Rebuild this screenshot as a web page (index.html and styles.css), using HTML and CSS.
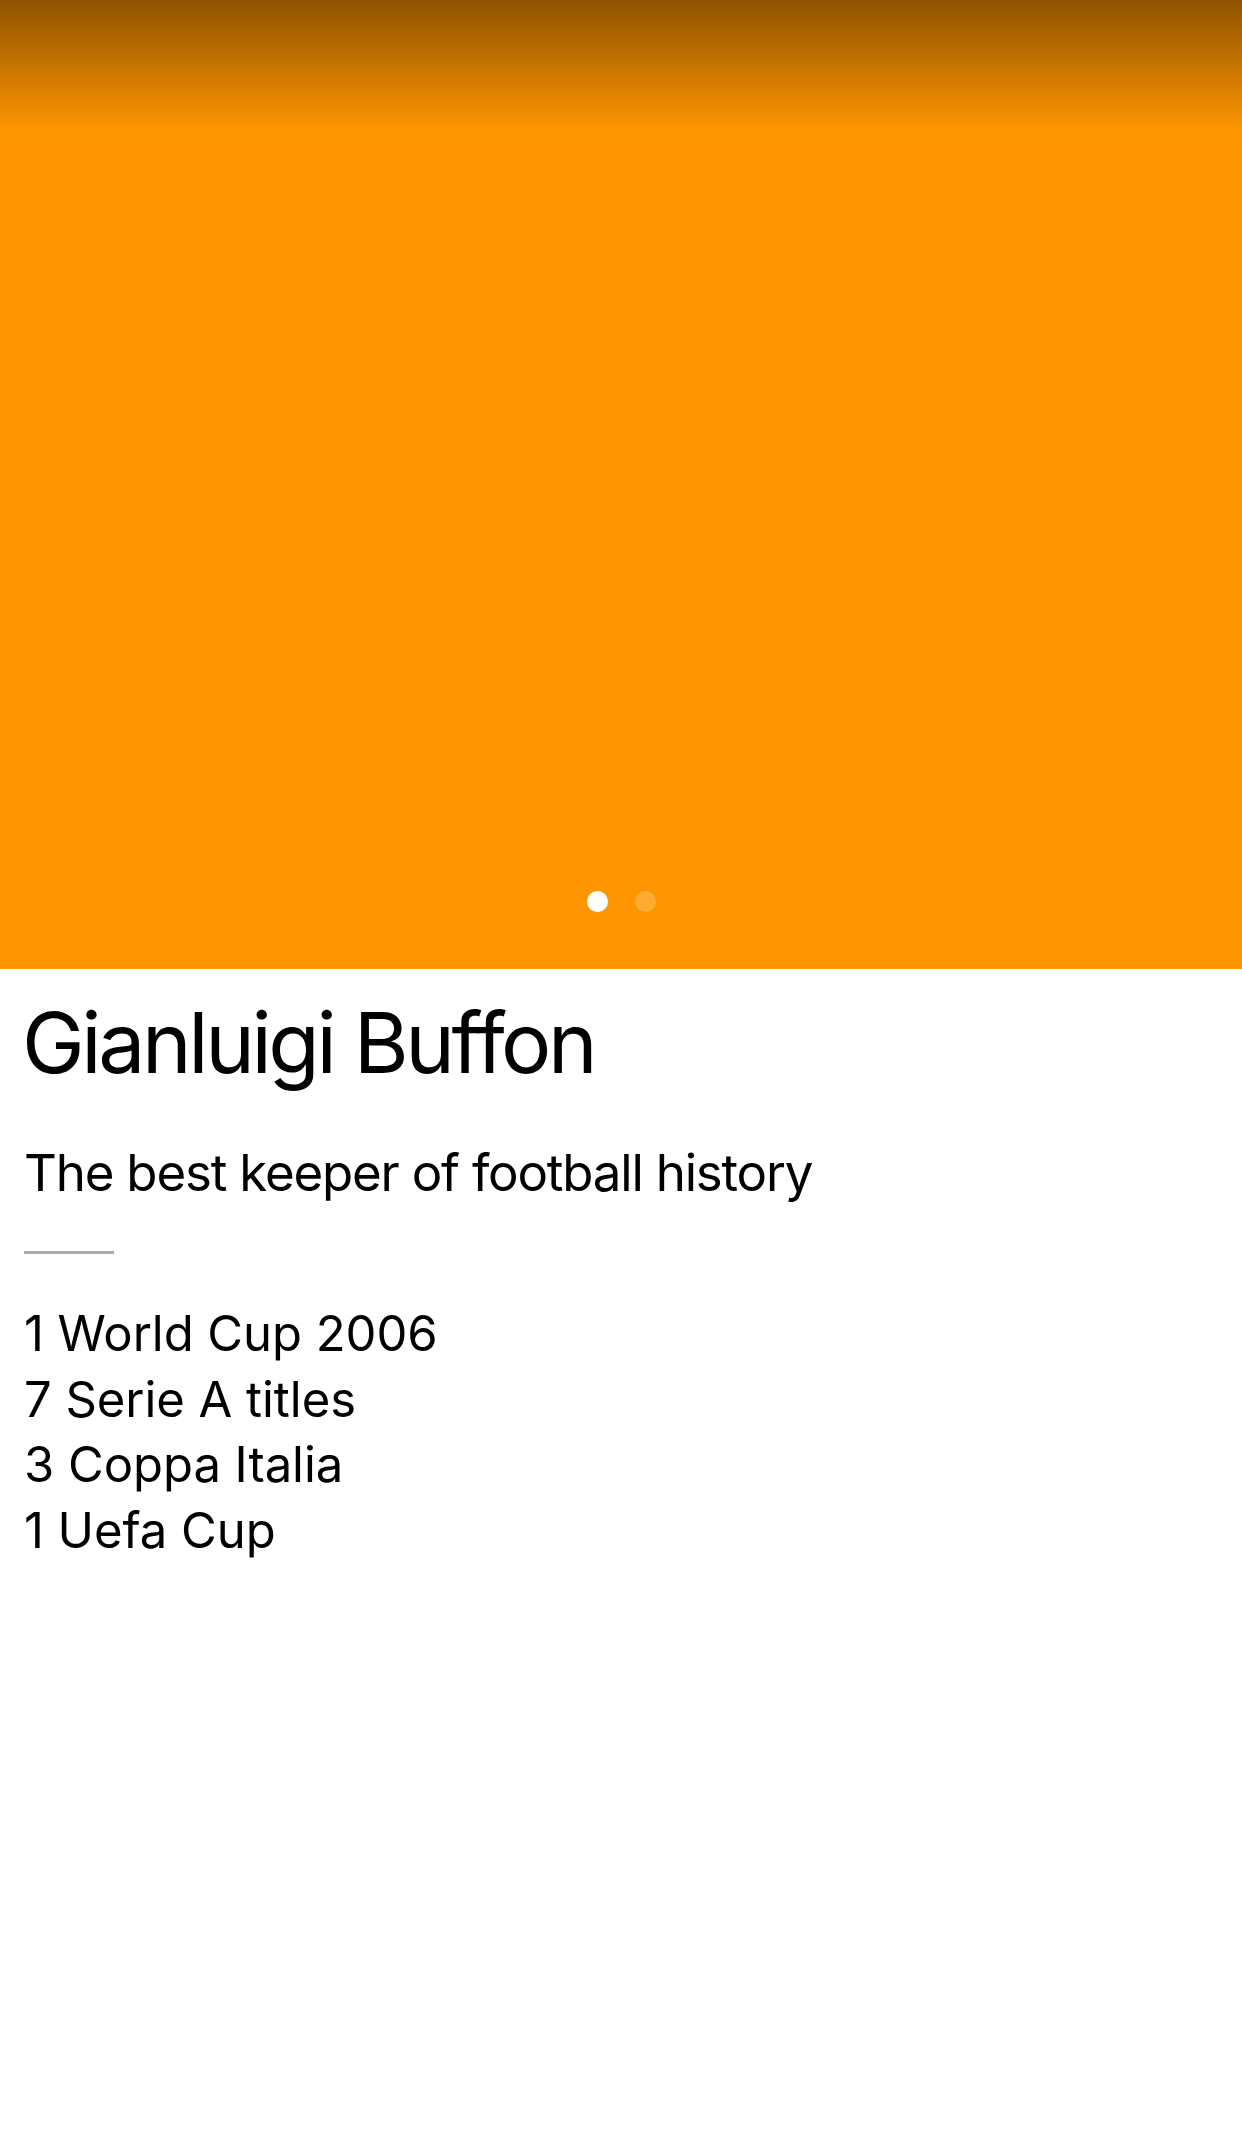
FILE: index.html
```html
<!DOCTYPE html>
<html lang="en">
<head>
<meta charset="utf-8">
<title>Gianluigi Buffon</title>
<link rel="stylesheet" href="styles.css">
</head>
<body>
  <div class="hero">
    <div class="dots">
      <span class="dot active"></span>
      <span class="dot"></span>
    </div>
  </div>
  <div class="content">
    <h1 class="title">Gianluigi Buffon</h1>
    <p class="subtitle">The best keeper of football history</p>
    <div class="divider"></div>
    <ul class="honours">
      <li>1 World Cup 2006</li>
      <li>7 Serie A titles</li>
      <li>3 Coppa Italia</li>
      <li>1 Uefa Cup</li>
    </ul>
  </div>
</body>
</html>
```

FILE: styles.css
```css
html, body {
  margin: 0;
  padding: 0;
  background: #ffffff;
}
body {
  font-family: Inter, "Noto Sans", "Liberation Sans", sans-serif;
  color: #000000;
  width: 1242px;
  min-height: 2148px;
}
.hero {
  height: 969px;
  background: linear-gradient(to bottom, rgba(0,0,0,0.44) 0px, rgba(0,0,0,0) 132px), #ff9500;
  display: flex;
  align-items: flex-end;
  justify-content: center;
  padding-bottom: 57px;
  box-sizing: border-box;
}
.dots {
  display: flex;
  gap: 27px;
}
.dot {
  width: 21px;
  height: 21px;
  border-radius: 50%;
  background: rgba(255,255,255,0.2);
}
.dot.active {
  background: #ffffff;
}
.content {
  padding: 0 24px;
}
.title {
  margin: 24px 0 0 -2px;
  font-size: 84px;
  font-weight: 400;
  line-height: 100px;
  letter-spacing: -3.4px;
}
.subtitle {
  margin: 49px 0 0 0;
  font-size: 51px;
  line-height: 61px;
  letter-spacing: -1.2px;
}
.divider {
  margin-top: 48px;
  width: 90px;
  height: 3px;
  background: #aaaaaa;
}
.honours {
  list-style: none;
  margin: 47px 0 0 0;
  padding: 0;
  font-size: 49px;
  line-height: 65.5px;
  letter-spacing: -0.05px;
}
```
